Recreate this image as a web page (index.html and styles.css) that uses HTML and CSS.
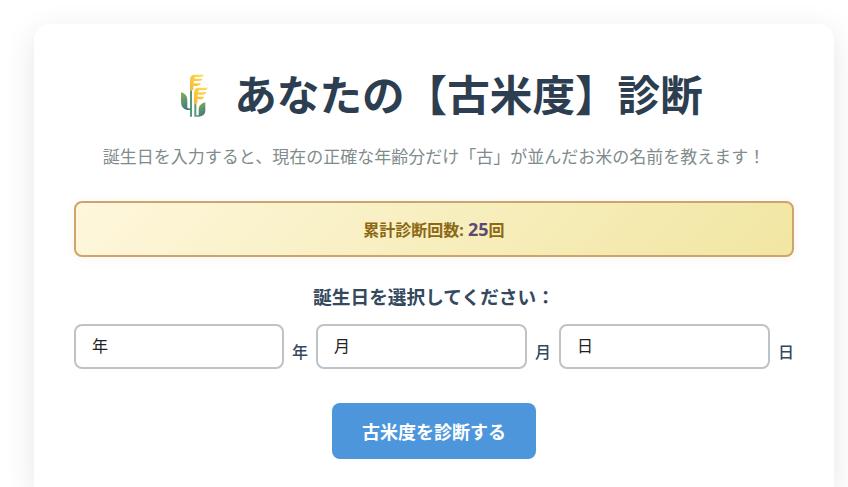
FILE: index.html
```html
<!DOCTYPE html>
<html lang="ja">
<head>
<meta charset="utf-8">
<title>古米度診断</title>
<link rel="stylesheet" href="styles.css">
</head>
<body>
<main class="card">
  <h1 class="title">
    <svg class="rice" viewBox="25 40 90 135" aria-hidden="true">
      <defs>
        <linearGradient id="leaf" x1="0" y1="0" x2="0.3" y2="1"><stop offset="0" stop-color="#83b251"/><stop offset="1" stop-color="#447a82"/></linearGradient>
        <linearGradient id="grain" x1="1" y1="0" x2="0" y2="1"><stop offset="0" stop-color="#fbe15a"/><stop offset="1" stop-color="#f7b533"/></linearGradient>
      </defs>
      <path d="M58 92h6v79h-6zM71 132h6v35h8v4H71z" fill="#55997a"/>
      <path d="M31 98Q50 103 50 121V145L60 147V151H49Q31 147 31 126Z" fill="url(#leaf)"/>
      <path d="M104 128V153Q104 168 84 171V149Q85 132 104 128Z" fill="url(#leaf)"/>
      <path d="M58 94V60Q58 45 73 45H100Q97 52 89 52H74L70 57H96Q94 64 85 64H69V71H91Q88 79 79 79H68V90Z" fill="url(#grain)"/>
      <path d="M70 135V100Q70 84 85 84H112Q109 92 101 92H85L82 98H108Q105 105 97 105H81V111H100Q98 119 89 119H80V131Z" fill="url(#grain)"/>
    </svg>
    <span>あなたの【古米度】診断</span>
  </h1>
  <p class="lead">誕生日を入力すると、現在の正確な年齢分だけ「古」が並んだお米の名前を教えます！</p>
  <div class="counter">累計診断回数: <span class="count">25</span>回</div>
  <div class="label">誕生日を選択してください：</div>
  <div class="fields">
    <div class="select">年</div><span class="unit">年</span>
    <div class="select">月</div><span class="unit">月</span>
    <div class="select">日</div><span class="unit">日</span>
  </div>
  <button class="submit">古米度を診断する</button>
</main>
</body>
</html>
```

FILE: styles.css
```css
* { box-sizing: border-box; }
body {
  margin: 0;
  height: 487px;
  overflow: hidden;
  padding: 24px 14px 0 34px;
  font-family: "Noto Sans", "Noto Sans CJK JP", sans-serif;
  color: #2c3e50;
  background: #fff;
}
.card {
  height: 463px;
  padding: 38px 40px 0;
  border-radius: 16px 16px 0 0;
  background: #fff;
  box-shadow: 0 8px 32px rgba(0, 0, 0, .1);
  display: flex;
  flex-direction: column;
  align-items: center;
}
.title {
  margin: 0;
  height: 64px;
  padding-left: 13.5px;
  display: flex;
  align-items: center;
  gap: 25.5px;
  font-size: 42.6px;
  line-height: 62px;
  white-space: nowrap;
}
.rice { width: 30px; height: 45px; margin-top: 2px; }
.lead { margin: 18px 0 0; font-size: 17px; line-height: 26px; color: #7f8c8d; white-space: nowrap; }
.counter {
  width: 100%;
  height: 56px;
  margin-top: 31px;
  border: 2px solid #cfa36c;
  border-radius: 8px;
  background: linear-gradient(135deg, #fef7dc, #f1e6a2);
  box-shadow: 0 2px 8px rgba(212, 163, 115, .12);
  color: #8b6914;
  font-size: 16px;
  font-weight: 700;
  line-height: 53px;
  text-align: center;
}
.count { color: #5b4a72; font-size: 18px; }
.label { margin-top: 26px; font-size: 18.7px; font-weight: 700; line-height: 28px; color: #34495e; }
.fields { width: 100%; margin-top: 13px; display: flex; align-items: center; }
.select { flex: 1; height: 45px; padding-left: 16px; border: 2px solid #bdc3c7; border-radius: 8px; font-size: 16px; line-height: 40px; color: #222; }
.select:first-child { flex: none; width: 210px; }
.unit { width: 16px; margin: 10px 8px 0; font-size: 16px; line-height: 24px; color: #34495e; font-weight: 500; }
.unit:last-child { margin-right: 0; }
.submit { width: 204px; height: 56px; margin-top: 34px; padding: 2px 0 0; border: 0; border-radius: 8px; background: #4d96db; color: #fff; font: 700 18px/54px "Noto Sans", "Noto Sans CJK JP", sans-serif; }
```
